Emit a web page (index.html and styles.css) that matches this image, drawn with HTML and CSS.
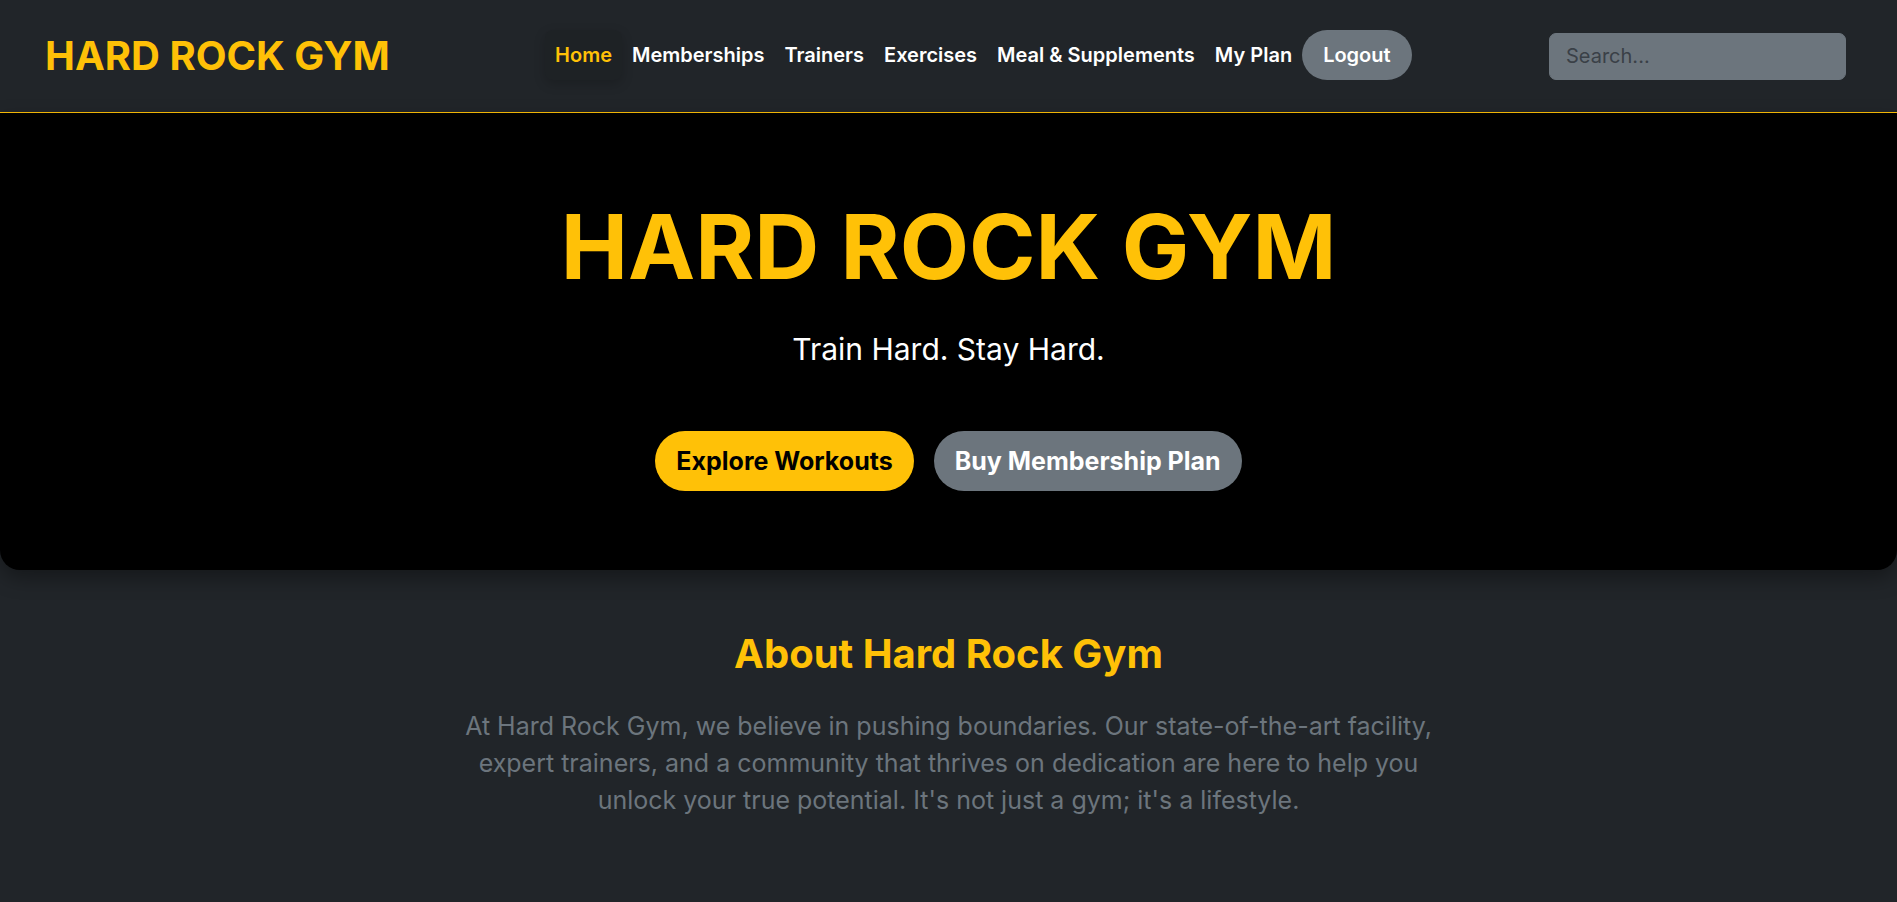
FILE: index.html
```html
<!DOCTYPE html>
<html lang="en">
<head>
<meta charset="utf-8">
<title>Hard Rock Gym</title>
<link rel="stylesheet" href="styles.css">
</head>
<body>
<header class="topbar">
  <a class="brand" href="#">HARD ROCK GYM</a>
  <nav class="nav">
    <a class="nav-link active" href="#">Home</a>
    <a class="nav-link" href="#">Memberships</a>
    <a class="nav-link" href="#">Trainers</a>
    <a class="nav-link" href="#">Exercises</a>
    <a class="nav-link" href="#">Meal &amp; Supplements</a>
    <a class="nav-link" href="#">My Plan</a>
    <button class="logout">Logout</button>
  </nav>
  <input class="search" type="text" placeholder="Search...">
</header>
<section class="hero">
  <h1 class="hero-title">HARD ROCK GYM</h1>
  <p class="hero-sub">Train Hard. Stay Hard.</p>
  <div class="hero-actions">
    <a class="btn btn-yellow" href="#">Explore Workouts</a>
    <a class="btn btn-grey" href="#">Buy Membership Plan</a>
  </div>
</section>
<section class="about">
  <h2 class="about-title">About Hard Rock Gym</h2>
  <p class="about-text">At Hard Rock Gym, we believe in pushing boundaries. Our state-of-the-art facility, expert trainers, and a community that thrives on dedication are here to help you unlock your true potential. It's not just a gym; it's a lifestyle.</p>
</section>
</body>
</html>
```
FILE: styles.css
```css
* { box-sizing: border-box; }
html, body { margin: 0; padding: 0; }
body {
  background: #212529;
  font-family: Inter, "Noto Sans", sans-serif;
  color: #fff;
  min-height: 902px;
}
a { text-decoration: none; }

.topbar {
  height: 113px;
  display: flex;
  align-items: center;
  padding: 0 51px 0 45px;
  border-bottom: 1px solid #ffc107;
  background: #212529;
}
.brand {
  color: #ffc107;
  font-weight: 700;
  font-size: 40px;
  line-height: 1;
  margin-right: 18px;
  margin-top: -1px;
}
.nav {
  display: flex;
  align-items: center;
  margin: 0 auto;
  margin-top: -2px;
}
.nav-link {
  color: #fff;
  font-weight: 600;
  font-size: 20px;
  line-height: 28px;
  padding: 11px 10px;
  border-radius: 8px;
}
.nav-link.active {
  color: #ffc107;
  background: rgba(0, 0, 0, 0.08);
  box-shadow: 0 4px 12px rgba(0, 0, 0, 0.18);
}
.logout {
  font-family: inherit;
  background: #6c757d;
  color: #fff;
  border: 0;
  font-weight: 600;
  font-size: 20px;
  line-height: 28px;
  padding: 11px 21px;
  border-radius: 26px;
  margin-left: 0;
}
.search {
  width: 297px;
  height: 47px;
  background: #6c757d;
  border: 1px solid #6c757d;
  border-radius: 7px;
  font-family: inherit;
  font-size: 20px;
  padding: 0 16px;
  color: #fff;
  outline: none;
}
.search::placeholder { color: #3a4047; }

.hero {
  background: #000;
  text-align: center;
  padding: 80px 0 79px;
  border-radius: 0 0 20px 20px;
  box-shadow: 0 8px 20px rgba(0, 0, 0, 0.35);
}
.hero-title {
  margin: 0 0 27px;
  color: #ffc107;
  font-size: 90px;
  line-height: 1.2;
  font-weight: 700;
}
.hero-sub {
  margin: 0 0 61px;
  font-size: 30px;
  line-height: 42px;
  color: #fff;
}
.hero-actions {
  display: flex;
  justify-content: center;
  gap: 20px;
}
.btn {
  font-weight: 700;
  font-size: 25px;
  line-height: 34px;
  padding: 13px 21px;
  border-radius: 30px;
}
.btn-yellow { background: #ffc107; color: #000; }
.btn-grey { background: #6c757d; color: #fff; }

.about {
  text-align: center;
  padding-top: 60px;
}
.about-title {
  margin: 0 0 30px;
  color: #ffc107;
  font-size: 40px;
  line-height: 1.2;
  font-weight: 700;
}
.about-text {
  margin: 0 auto;
  max-width: 1000px;
  color: #6c757d;
  font-size: 25px;
  line-height: 37px;
}
```
